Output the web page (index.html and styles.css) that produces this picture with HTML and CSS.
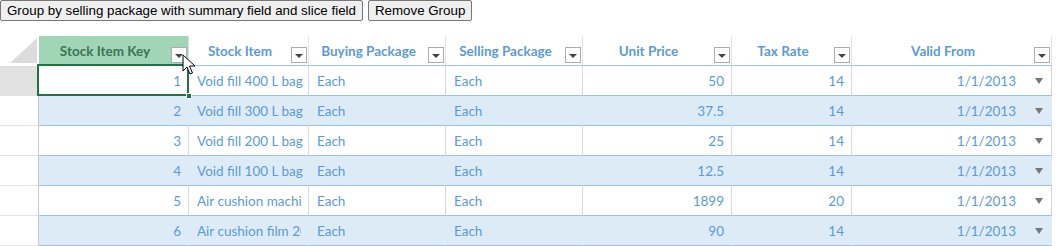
FILE: index.html
```html
<!DOCTYPE html>
<html>
<head>
<meta charset="utf-8">
<link rel="stylesheet" href="styles.css">
</head>
<body>
<div class="toolbar"><button class="btn">Group by selling package with summary field and slice field</button> <button class="btn">Remove Group</button></div>
<div class="sheet">
  <div class="grid">
    <div class="corner"><svg width="28" height="26" viewBox="0 0 28 26"><polygon points="1,26 28,26 28,1" fill="#dcdcdc"/></svg></div>
    <div class="hcell active"><span class="htext">Stock Item Key</span><span class="dd"><i></i></span></div>
    <div class="hcell"><span class="htext">Stock Item</span><span class="dd"><i></i></span></div>
    <div class="hcell"><span class="htext">Buying Package</span><span class="dd"><i></i></span></div>
    <div class="hcell"><span class="htext">Selling Package</span><span class="dd"><i></i></span></div>
    <div class="hcell"><span class="htext">Unit Price</span><span class="dd"><i></i></span></div>
    <div class="hcell"><span class="htext">Tax Rate</span><span class="dd"><i></i></span></div>
    <div class="hcell last"><span class="htext">Valid From</span><span class="dd"><i></i></span></div>

    <div class="rh sel"></div>
    <div class="c num selected">1</div><div class="c">Void fill 400 L bag</div><div class="c">Each</div><div class="c">Each</div><div class="c num">50</div><div class="c num">14</div><div class="c date">1/1/2013<i class="tri"></i></div>

    <div class="rh"></div>
    <div class="c num alt">2</div><div class="c alt">Void fill 300 L bag</div><div class="c alt">Each</div><div class="c alt">Each</div><div class="c num alt">37.5</div><div class="c num alt">14</div><div class="c date alt">1/1/2013<i class="tri"></i></div>

    <div class="rh"></div>
    <div class="c num">3</div><div class="c">Void fill 200 L bag</div><div class="c">Each</div><div class="c">Each</div><div class="c num">25</div><div class="c num">14</div><div class="c date">1/1/2013<i class="tri"></i></div>

    <div class="rh"></div>
    <div class="c num alt">4</div><div class="c alt">Void fill 100 L bag</div><div class="c alt">Each</div><div class="c alt">Each</div><div class="c num alt">12.5</div><div class="c num alt">14</div><div class="c date alt">1/1/2013<i class="tri"></i></div>

    <div class="rh"></div>
    <div class="c num">5</div><div class="c clip"><span>Air cushion machine blue</span></div><div class="c">Each</div><div class="c">Each</div><div class="c num">1899</div><div class="c num">20</div><div class="c date">1/1/2013<i class="tri"></i></div>

    <div class="rh"></div>
    <div class="c num alt">6</div><div class="c alt clip"><span>Air cushion film 200x100</span></div><div class="c alt">Each</div><div class="c alt">Each</div><div class="c num alt">90</div><div class="c num alt">14</div><div class="c date alt">1/1/2013<i class="tri"></i></div>
  </div>
  <svg class="cursor" width="14" height="22" viewBox="0 0 14 22"><path d="M1 1 L1 17 L5 13 L8 20 L10.5 19 L7.5 12 L13 12 Z" fill="#fff" stroke="#000" stroke-width="1" stroke-linejoin="miter"/></svg>
</div>
</body>
</html>
```

FILE: styles.css
```css
html, body {
  margin: 0;
  padding: 0;
  background: #fff;
}
.toolbar {
  height: 36px;
  font-size: 0;
}
.btn {
  font-family: "Liberation Sans", Arial, sans-serif;
  font-size: 13.33px;
  height: 21px;
  padding: 1px 6px;
  margin: 0 5px 0 0;
  background: #efefef;
  border: 1px solid #767676;
  border-radius: 2px;
  color: #000;
  vertical-align: top;
}
.sheet {
  position: relative;
  width: 1056px;
}
.grid {
  display: grid;
  grid-template-columns: 39px 150px 120px 137px 137px 149px 120px 200px;
  grid-auto-rows: 30px;
  font-family: Lato, "Open Sans", sans-serif;
  font-size: 13.5px;
}
.corner {
  display: flex;
  align-items: flex-end;
  justify-content: flex-end;
  padding: 0 2px 3px 0;
  box-sizing: border-box;
}
.corner svg { display: block; }
.hcell {
  display: flex;
  align-items: stretch;
  box-sizing: border-box;
  border-right: 1px solid #e4e4e4;
  border-bottom: 1px solid #9bc2e6;
  color: #5b9bd5;
  font-weight: bold;
  font-size: 13.5px;
}
.hcell.active {
  background: #a0d6b6;
  color: #3a7552;
  border-right-color: #c9e7d5;
}
.htext {
  flex: 1;
  display: flex;
  align-items: center;
  justify-content: center;
  padding-top: 1px;
  white-space: nowrap;
}
.dd {
  align-self: flex-end;
  width: 16px;
  height: 16px;
  box-sizing: border-box;
  border: 1px solid #acacac;
  background: #fff;
  margin: 0 1px 2px 0;
  display: flex;
  align-items: center;
  justify-content: center;
}
.dd i {
  display: block;
  width: 0;
  height: 0;
  border-left: 4px solid transparent;
  border-right: 4px solid transparent;
  border-top: 4px solid #444;
  margin-top: 2px;
}
.rh {
  box-sizing: border-box;
  border-bottom: 1px solid #e3e3e3;
  border-right: 1px solid #c8c8c8;
}
.rh.sel {
  background: #e1e1e1;
  border-bottom-color: #e1e1e1;
}
.c {
  box-sizing: border-box;
  border-right: 1px solid #d9d9d9;
  border-bottom: 1px solid #9bc2e6;
  color: #5b9bd5;
  padding: 0 7px 0 8px;
  display: flex;
  align-items: center;
  white-space: nowrap;
  overflow: hidden;
  background: #fff;
}
.c.clip span {
  display: block;
  overflow: hidden;
  max-width: 104px;
}
.c.alt {
  background: #ddebf7;
  border-right-color: #ddebf7;
}
.c.num {
  justify-content: flex-end;
}
.c.date {
  justify-content: flex-end;
  padding-right: 8px;
  border-right-color: #d4d4d4;
}
.c.date.alt {
  border-right-color: #ddebf7;
}
.tri {
  display: block;
  width: 0;
  height: 0;
  border-left: 4.5px solid transparent;
  border-right: 4.5px solid transparent;
  border-top: 6px solid #777;
  margin-left: 19px;
}
.selected {
  position: relative;
  overflow: visible;
}
.selected::after {
  content: "";
  position: absolute;
  left: -2px;
  top: -2px;
  right: -1px;
  bottom: -1px;
  border: 2px solid #217346;
  pointer-events: none;
}
.selected::before {
  content: "";
  position: absolute;
  right: -4px;
  bottom: -4px;
  width: 6px;
  height: 6px;
  background: #217346;
  border: 1px solid #fff;
  box-sizing: border-box;
  z-index: 2;
}
.cursor {
  position: absolute;
  left: 182px;
  top: 18px;
  z-index: 5;
}
```
